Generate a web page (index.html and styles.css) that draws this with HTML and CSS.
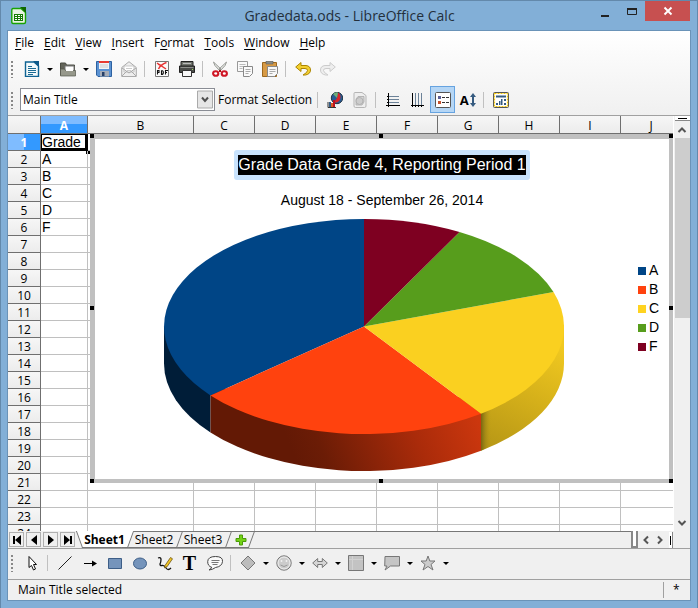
FILE: index.html
```html
<!DOCTYPE html>
<html lang="en">
<head>
<meta charset="utf-8">
<title>Gradedata.ods - LibreOffice Calc</title>
<link rel="stylesheet" href="styles.css">
</head>
<body>
<header class="titlebar">
  <svg class="app-icon" viewBox="0 0 16 18"><path d="M2 1.500h8l4.500 4v9.500q0 1.500-1.500 1.500H2Q.8 16.500.8 15V3Q.8 1.500 2 1.500z" fill="#e9f3e4" stroke="#18a303" stroke-width="1.400"/><path d="M9 0h6v6z" fill="#106802"/><path d="M3 7h9v7H3z" fill="#167a05"/><path d="M4 8h2v1H4zM7 8h2v1H7zM10 8h1v1h-1zM4 10h2v1H4zM7 10h2v1H7zM10 10h1v1h-1zM4 12h2v1H4zM7 12h2v1H7zM10 12h1v1h-1z" fill="#fff"/></svg>
  <h1>Gradedata.ods - LibreOffice Calc</h1>
  <div class="window-buttons">
    <button class="win" aria-label="Minimize"><svg viewBox="0 0 12 12"><path d="M2 9h8v2H2z" fill="#222"/></svg></button>
    <button class="win" aria-label="Maximize"><svg viewBox="0 0 12 12"><path d="M1.500 2.500h9v6h-9z" fill="none" stroke="#222"/><path d="M1 2h10v2H1z" fill="#222"/></svg></button>
    <button class="win close" aria-label="Close"><svg viewBox="0 0 12 12"><path d="M2.500 2.500l7 7M9.500 2.500l-7 7" stroke="#fff" stroke-width="1.900"/></svg></button>
  </div>
</header>
<main class="app">
  <div class="bars">
    <nav class="menubar">
      <button><u>F</u>ile</button><button><u>E</u>dit</button><button><u>V</u>iew</button><button><u>I</u>nsert</button><button>F<u>o</u>rmat</button><button><u>T</u>ools</button><button><u>W</u>indow</button><button><u>H</u>elp</button>
    </nav>
    <div class="toolbar">
      <span class="grip"></span>
      <button class="tool" aria-label="New"><svg viewBox="0 0 16 16"><path d="M1.500 1H10l4.500 4v10.500h-13z" fill="#f4fafc" stroke="#0f6393" stroke-width="1.400"/><path d="M9 0h6v6z" fill="#0f5a8a"/><path d="M4 5.500h4M4 7.500h8M4 9.500h8M4 11.500h8M4 13.500h5" stroke="#1b6b94"/></svg></button>
      <button class="drop" aria-label="New menu"></button>
      <button class="tool" aria-label="Open"><svg viewBox="0 0 16 16"><path d="M.5 14V2h5l1 2h8v10z" fill="#63655a" stroke="#4b4d43"/><path d="M5 5h9v6H5z" fill="#fff" stroke="#777"/><path d="M6.500 7.500h6M6.500 9.500h6" stroke="#aaa"/><path d="M.5 15h15V9.500h-10L4.500 8H.5z" fill="#96988b" stroke="#55574c" stroke-width=".7"/><path d="M6 7h7v3H6z" fill="#fff"/></svg></button>
      <button class="drop" aria-label="Open menu"></button>
      <button class="tool" aria-label="Save"><svg viewBox="0 0 16 16"><path d="M.5.5h15v15H2l-1.500-1.500z" fill="#5b92d2" stroke="#2d61a0"/><path d="M3 1h10v7H3z" fill="#f2f3f5"/><path d="M3 0h10v2H3z" fill="#e83a30"/><path d="M4 4h8M4 6h8" stroke="#ccc"/><path d="M4 10h9v5.500H4z" fill="#a5acb7"/><path d="M6 11h2.500v4H6z" fill="#253f67"/></svg></button>
      <button class="tool" aria-label="Mail"><svg viewBox="0 0 16 16"><path d="M.7 6.500L8 .7l7.300 5.800v9H.7z" fill="#eee" stroke="#aaa"/><path d="M3 5h10v6H3z" fill="#fff" stroke="#b5b5b5" stroke-width=".7"/><path d="M1 7l7 5 7-5M1 15l5-5M15 15l-5-5" fill="none" stroke="#aaa"/><path d="M5 7.500h6M6 9.500h4" stroke="#ccc"/></svg></button>
      <span class="sep"></span>
      <button class="tool" aria-label="Export as PDF"><svg viewBox="0 0 16 16"><path d="M1.500.5h13v15h-13z" fill="#fafafa" stroke="#777"/><path d="M3 2l9 6M12.500 1.500C8 3 6 5 4.500 8M4 3l4 2" stroke="#e73332" stroke-width="1.500" fill="none"/><path d="M3.500 13.500v-4h1.500v2H3.500M7.500 9.500v4c2.500 0 2.500-4 0-4M11.500 13.500v-4h2.500M11.500 11.500H13" fill="none" stroke="#111" stroke-width="1.100"/></svg></button>
      <button class="tool" aria-label="Print"><svg viewBox="0 0 16 16"><path d="M2 .5h12v5H2z" fill="#70746d" stroke="#222"/><path d="M4 2h8v1H4z" fill="#bbb"/><path d="M.5 5h15v6.500H.5z" fill="#4a4c49" stroke="#222"/><path d="M1.500 6h13v1h-13z" fill="#8c8e8a"/><path d="M3.500 9.500h9v6h-9z" fill="#f8f8f8" stroke="#333"/><path d="M13 8h1v1h-1z" fill="#9fdb62"/></svg></button>
      <span class="sep"></span>
      <button class="tool" aria-label="Cut"><svg viewBox="0 0 16 16"><path d="M1.500 1q0 3 5.500 8l2-1zM14.500 1q0 3-5.500 8L7 8z" fill="#e2e4e0" stroke="#888a85" stroke-width=".8"/><path d="M7 9l2 2M9 9l-2 2" stroke="#a11"/><ellipse cx="3.700" cy="12.500" rx="2.600" ry="2.300" fill="#fff" stroke="#cf1625" stroke-width="2.100"/><ellipse cx="12.300" cy="12.500" rx="2.600" ry="2.300" fill="#fff" stroke="#cf1625" stroke-width="2.100"/></svg></button>
      <button class="tool" aria-label="Copy"><svg viewBox="0 0 16 16"><path d="M.5.500h10v10H.5z" fill="#fafafa" stroke="#999"/><path d="M2.500 3.500h6M2.500 5.500h6M2.500 7.500h3" stroke="#bbb"/><path d="M6.500 5.500h9v7l-3 3h-6z" fill="#fafafa" stroke="#888"/><path d="M8.500 8.500h5M8.500 10.500h5M8.500 12.500h3" stroke="#aaa"/></svg></button>
      <button class="tool" aria-label="Paste"><svg viewBox="0 0 16 16"><path d="M.5 1.500h14v14H.5z" fill="#d79a45" stroke="#9b671e"/><path d="M4 0h7v3H4z" fill="#8a8c87" stroke="#555" stroke-width=".5"/><path d="M5.500 5.500h10v7l-3 3h-7z" fill="#f8f8f8" stroke="#888"/><path d="M7.500 8.500h6M7.500 10.500h6M7.500 12.500h3" stroke="#aaa"/></svg></button>
      <span class="sep"></span>
      <button class="tool" aria-label="Undo"><svg viewBox="0 0 16 16"><path d="M.7 6L6 1.500v3h5q4.500.5 4.500 4.500t-5 5H8q4.500-2.500 4.500-4.500T10 7.500H6v3z" fill="#f3cf2f" stroke="#ac8500"/></svg></button>
      <button class="tool" aria-label="Redo"><svg viewBox="0 0 16 16"><path d="M15.300 6L10 1.500v3H5Q.5 5 .5 9t5 5H8Q3.500 11.500 3.500 9.500T6 7.500h4v3z" fill="#eee" stroke="#ccc"/></svg></button>
    </div>
    <div class="toolbar formatting">
      <span class="grip"></span>
      <label class="combo"><select aria-label="Chart element"><option>Main Title</option></select><svg viewBox="0 0 16 18"><path d="M.5.5h15v17H.5z" fill="#e6e6e6" stroke="#aaa"/><path d="M5 7l3 3.500L11 7" fill="none" stroke="#505050" stroke-width="2"/></svg></label>
      <button class="text-tool">Format Selection</button>
      <span class="sep"></span>
      <button class="tool" aria-label="Chart type"><svg viewBox="0 0 16 16"><circle cx="10" cy="6" r="5.700" fill="#275c93" stroke="#234"/><path d="M10 6l1-5.500a5.500 5.500 0 0 1-4 10z" fill="#dc2328"/><path d="M10 6L6 2a5.500 5.500 0 0 1 5-1.500z" fill="#6fae78"/><path d="M1 10v5.500h8" fill="none" stroke="#333"/><path d="M2 10h2v5H2z" fill="#345d86"/><path d="M4 11h2v4H4z" fill="#d95a22"/><path d="M6 8h2v7H6z" fill="#b12"/></svg></button>
      <button class="tool" aria-label="Chart area"><svg viewBox="0 0 16 16"><path d="M2 1.500q0-1 1-1h7l4 3V14q0 1.500-1.500 1.500H3.500Q2 15.500 2 14z" fill="#eee" stroke="#b5b5b5"/><path d="M4 7l2-2.500h6V10l-2 3H4z" fill="#d5d5d5" stroke="#aaa" stroke-width=".8"/><circle cx="7.500" cy="9" r="3.500" fill="#ccc" stroke="#aaa" stroke-width=".8"/></svg></button>
      <span class="sep"></span>
      <button class="tool" aria-label="Horizontal grids"><svg viewBox="0 0 16 16"><path d="M3 4.500h11M3 7.500h11M3 10.500h11" stroke="#6c8298"/><path d="M3.500 1v14M1 13.500h14M2 4.500h2M2 7.500h2M2 10.500h2" stroke="#000"/></svg></button>
      <button class="tool" aria-label="Vertical grids"><svg viewBox="0 0 16 16"><path d="M5.500 1v12M8.500 1v12M11.500 1v12" stroke="#6c8298"/><path d="M2.500 1v14M1 13.500h13M5.500 13v2M8.500 13v2M11.500 13v2" stroke="#000"/></svg></button>
      <button class="tool active" aria-label="Legend"><svg viewBox="0 0 16 16"><rect x=".5" y=".5" width="15" height="15" rx="1" fill="#fff" stroke="#555"/><path d="M3 4h3v3H3z" fill="#5b5f97"/><path d="M3 9h3v3H3z" fill="#c6512d"/><path d="M7 5.500h3M11 5.500h3M7 10.500h3M11 10.500h3" stroke="#333"/></svg></button>
      <button class="tool scale" aria-label="Scale text"><b>A</b><svg viewBox="0 0 6 14"><path d="M3 0l3 4H4v6h2l-3 4-3-4h2V4H0z" fill="#365b80"/></svg></button>
      <span class="sep"></span>
      <button class="tool" aria-label="Automatic layout"><svg viewBox="0 0 16 16"><rect x=".5" y=".5" width="15" height="15" rx="1" fill="#fff" stroke="#555"/><rect x="1.500" y="1.500" width="13" height="13" fill="none" stroke="#f4c80a" stroke-width="1.200" stroke-dasharray="2 1"/><path d="M3 3.500h10v2H3zM3 11h2v2H3zM6 9h1.500v4H6zM8 7h1.500v6H8zM11 7h2v2h-2zM11 11h2v2h-2z" fill="#365b80"/></svg></button>
    </div>
  </div>
  <section class="workspace">
    <div class="sheet">
      <table><thead><tr><th></th></tr></thead><tbody></tbody></table>
      <figure class="chart">
        <i class="handle tl"></i><i class="handle tc"></i><i class="handle tr"></i><i class="handle ml"></i><i class="handle mr"></i><i class="handle bl"></i><i class="handle bc"></i><i class="handle br"></i>
        <h2><span>Grade Data Grade 4, Reporting Period 1</span></h2>
        <h3>August 18 - September 26, 2014</h3>
        <div class="plot">
          <svg class="pie" viewBox="0 0 402 254">
            <defs>
              <linearGradient id="orange-wall" gradientUnits="userSpaceOnUse" x1="130" y1="235" x2="300" y2="165"><stop offset="0" stop-color="#631905"/><stop offset=".15" stop-color="#6b1c06"/><stop offset=".65" stop-color="#aa2b0a"/><stop offset="1" stop-color="#cc370e"/></linearGradient>
              <linearGradient id="yellow-wall" gradientUnits="userSpaceOnUse" x1="330" y1="230" x2="385" y2="120"><stop offset="0" stop-color="#b89816"/><stop offset=".5" stop-color="#d5b01a"/><stop offset="1" stop-color="#f1c920"/></linearGradient>
              <linearGradient id="edge-shade"><stop offset="0" stop-color="#786611"/><stop offset="1" stop-color="#b99b19" stop-opacity="0"/></linearGradient>
            </defs>
            <path d="M1 108.500V145.500A200 107.500 0 0 0 47.500 214.400V150z" fill="#001d38"/>
            <path d="M47.500 170V214.400A200 107.500 0 0 0 318 232.700V180z" fill="url(#orange-wall)"/>
            <path d="M318 180V232.700A200 107.500 0 0 0 401 145.500V108.500z" fill="url(#yellow-wall)"/>
            <path d="M318 190V232.700l10-4.700V185z" fill="url(#edge-shade)"/>
            <path d="M201 108.500V1A200 107.500 0 0 0 47.500 177.400z" fill="#004586"/>
            <path d="M201 108.500L47.500 177.400A200 107.500 0 0 0 318 195.700z" fill="#ff420e"/>
            <path d="M201 108.500L318 195.700A200 107.500 0 0 0 390.500 74.100z" fill="#fad020"/>
            <path d="M201 108.500L390.500 74.100A200 107.500 0 0 0 296.500 14z" fill="#579d1c"/>
            <path d="M201 108.500L296.500 14A200 107.500 0 0 0 201 1z" fill="#7e0021"/>
          </svg>
          <ul class="legend"><li><i class="key-a"></i>A</li><li><i class="key-b"></i>B</li><li><i class="key-c"></i>C</li><li><i class="key-d"></i>D</li><li><i class="key-f"></i>F</li></ul>
        </div>
      </figure>
    </div>
    <div class="scrollbar">
      <span class="split"></span>
      <button aria-label="Scroll up"><svg viewBox="0 0 10 8"><path d="M1.500 6L5 2.500 8.500 6" fill="none" stroke="#555" stroke-width="2"/></svg></button>
      <div class="track"><span class="thumb"></span></div>
      <button aria-label="Scroll down"><svg viewBox="0 0 10 8"><path d="M1.500 2L5 5.500 8.500 2" fill="none" stroke="#555" stroke-width="2"/></svg></button>
    </div>
  </section>
  <div class="tabbar">
    <button class="nav" aria-label="First sheet"><svg viewBox="0 0 10 10"><path d="M1 1h2v8H1zM9 0v10L3 5z"/></svg></button>
    <button class="nav" aria-label="Previous sheet"><svg viewBox="0 0 10 10"><path d="M8 0v10L2 5z"/></svg></button>
    <button class="nav" aria-label="Next sheet"><svg viewBox="0 0 10 10"><path d="M2 0v10l6-5z"/></svg></button>
    <button class="nav" aria-label="Last sheet"><svg viewBox="0 0 10 10"><path d="M7 1h2v8H7zM1 0v10l6-5z"/></svg></button>
    <button class="tab current"><span>Sheet1</span></button>
    <button class="tab"><span>Sheet2</span></button>
    <button class="tab"><span>Sheet3</span></button>
    <button class="tab add" aria-label="Add sheet"><svg viewBox="0 0 12 12"><path d="M4.500 1h3v3.500H11v3H7.500V11h-3V7.500H1v-3h3.500z" fill="#73d216" stroke="#4a9a08"/></svg></button>
    <span class="filler"></span>
    <span class="hsplit"></span>
    <button class="hscroll" aria-label="Scroll left"><svg viewBox="0 0 8 10"><path d="M6 1.500L2.500 5 6 8.500" fill="none" stroke="#555" stroke-width="2"/></svg></button>
    <button class="hscroll" aria-label="Scroll right"><svg viewBox="0 0 8 10"><path d="M2 1.500L5.500 5 2 8.500" fill="none" stroke="#555" stroke-width="2"/></svg></button>
    <span class="endsplit"></span>
  </div>
  <div class="toolbar drawing">
    <span class="grip"></span>
    <button class="tool" aria-label="Select"><svg viewBox="0 0 16 16"><path d="M5 1.500v11l2.500-2 2 4.500 2-1-2-4.500h3z" fill="#fff" stroke="#111"/></svg></button>
    <span class="sep"></span>
    <button class="tool" aria-label="Line"><svg viewBox="0 0 16 16"><path d="M1.500 14.500l13-13" stroke="#222"/></svg></button>
    <button class="tool" aria-label="Arrow line"><svg viewBox="0 0 16 16"><path d="M2 8.500h9" stroke="#000"/><path d="M10 5.500l5 3-5 3z"/></svg></button>
    <button class="tool" aria-label="Rectangle"><svg viewBox="0 0 16 16"><path d="M1.500 3.500h13v10h-13z" fill="#7594bb" stroke="#3d5e87"/></svg></button>
    <button class="tool" aria-label="Ellipse"><svg viewBox="0 0 16 16"><ellipse cx="8" cy="8.500" rx="6.500" ry="5.500" fill="#7594bb" stroke="#3d5e87"/></svg></button>
    <button class="tool" aria-label="Freeform"><svg viewBox="0 0 16 16"><path d="M1 3q3-1 3 1.500T3 9q0 2 2 1.500T9 13t5 0" fill="none" stroke="#111" stroke-width="1.300"/><path d="M8 10.500l5.500-8 2 1.300-5.500 8-2.500 1z" fill="#f3c623" stroke="#6b5310" stroke-width=".8"/></svg></button>
    <button class="tool letter" aria-label="Text">T</button>
    <button class="tool" aria-label="Callout"><svg viewBox="0 0 16 16"><path d="M2 15l3-2.500Q.5 11 .7 6.500 1 1.500 8.500 1.500t7 5-7 6Q6 14.500 2 15z" fill="#fafafa" stroke="#444"/><path d="M4.500 5.500h8M4.500 7.500h7M5.500 9.500h5" stroke="#777"/></svg></button>
    <span class="sep"></span>
    <button class="tool" aria-label="Basic shapes"><svg viewBox="0 0 16 16"><path d="M8 1l7 7-7 7-7-7z" fill="#bcbcbc" stroke="#777"/></svg></button><button class="drop" aria-label="Basic shapes menu"></button>
    <button class="tool" aria-label="Symbol shapes"><svg viewBox="0 0 16 16"><circle cx="8" cy="8" r="7.200" fill="#ccc" stroke="#777"/><circle cx="8" cy="8" r="6" fill="none" stroke="#eee"/><path d="M5.500 5v2M10.500 5v2" stroke="#eee" stroke-width="1.500"/><path d="M4.500 10q3.500 3 7 0" fill="none" stroke="#999"/></svg></button><button class="drop" aria-label="Symbol shapes menu"></button>
    <button class="tool" aria-label="Block arrows"><svg viewBox="0 0 16 16"><path d="M.7 8l5-4.500v3h4.600v-3l5 4.500-5 4.500v-3H5.700v3z" fill="#d5d5d5" stroke="#777"/></svg></button><button class="drop" aria-label="Block arrows menu"></button>
    <button class="tool" aria-label="Flowcharts"><svg viewBox="0 0 16 16"><path d="M.5.500h15v15H.5z" fill="#c3c3c3" stroke="#777"/><path d="M4.500 1v14M1 4.500h14" stroke="#d2d2d2"/></svg></button><button class="drop" aria-label="Flowcharts menu"></button>
    <button class="tool" aria-label="Callouts"><svg viewBox="0 0 16 16"><path d="M1 1.500h14.500V11H6.500L1 15l2-4H.7z" fill="#c5c5c5" stroke="#777"/></svg></button><button class="drop" aria-label="Callouts menu"></button>
    <button class="tool" aria-label="Stars"><svg viewBox="0 0 16 16"><path d="M8 1l1.800 5H15l-4 3.500 2 5.500-5-3.500L3 15l2-5.500L1 6h5.200z" fill="#ccc" stroke="#777"/></svg></button><button class="drop" aria-label="Stars menu"></button>
  </div>
  <footer class="status"><span>Main Title selected</span><span class="modified">*</span></footer>
</main>
<script src="sheet.js"></script>
</body>
</html>
```
FILE: sheet.js
```js
const columns = "ABCDEFGHIJ".split("");
const values = ["Grade", "A", "B", "C", "D", "F"];
const head = document.querySelector("thead tr");
const body = document.querySelector("tbody");

for (const name of columns) {
  const th = document.createElement("th");
  th.scope = "col";
  th.className = "col-" + name.toLowerCase();
  th.textContent = name;
  head.append(th);
}

for (let row = 1; row <= 24; row++) {
  const tr = document.createElement("tr");
  const th = document.createElement("th");
  th.scope = "row";
  th.textContent = row;
  tr.append(th);
  for (const name of columns) {
    const td = document.createElement("td");
    if (name === "A") td.textContent = values[row - 1] || "";
    tr.append(td);
  }
  body.append(tr);
}
```
FILE: styles.css
```css
* { box-sizing: border-box; }
html, body { height: 100%; }
body {
  margin: 0;
  padding: 0 7px 8px;
  display: flex;
  flex-direction: column;
  background: #82afd7;
  border: 1px solid #6389ab;
  border-bottom-width: 0;
  font: 12px/16px "Open Sans", "Noto Sans", sans-serif;
  color: #000;
  overflow: hidden;
}
button { border: 0; padding: 0; background: none; font: inherit; color: inherit; }
svg { display: block; }

.titlebar { display: flex; align-items: center; height: 29px; flex: none; }
.app-icon { width: 16px; height: 18px; margin-left: 3px; }
.titlebar h1 { flex: 1; margin: 0; font-size: 14px; line-height: 20px; font-weight: 400; color: #24303c; text-align: center; padding-left: 81px; }
.window-buttons { display: flex; align-self: flex-start; }
.win { width: 27px; height: 21px; display: grid; place-items: center; }
.win svg { width: 12px; height: 12px; }
.win.close { width: 45px; height: 20px; background: #c75050; }

.app { flex: 1; min-height: 0; display: flex; flex-direction: column; background: #f0f0f0; outline: 1px solid #6a93b8; margin-top: 1px; }
.bars { background: linear-gradient(#fff, #f0f0f0); border-bottom: 1px solid #a0a0a0; }
.menubar { display: flex; gap: 10px; height: 23px; padding-left: 7px; align-items: center; }
.menubar u { text-underline-offset: 2px; }

.toolbar { display: flex; align-items: center; height: 30px; }
.toolbar.formatting { height: 31px; }
.grip { width: 11px; height: 18px; background: radial-gradient(circle, #888 1px, transparent 1px) 2px 0 / 4px 4px repeat-y; }
.tool { width: 25px; height: 27px; display: grid; place-items: center; }
.tool svg { width: 16px; height: 16px; }
.tool.active { background: #b5d6f5; border: 1px solid #66a3e0; }
.tool.scale { display: flex; align-items: center; justify-content: center; gap: 1px; font-size: 13px; }
.tool.scale svg { width: 6px; height: 14px; }
.tool.letter { font: bold 20px/20px "Liberation Serif", serif; }
.drop { width: 11px; height: 20px; display: grid; place-items: center; }
.drop::before { content: ""; border: 3px solid transparent; border-top-color: #000; border-bottom: 0; }
.sep { width: 8px; height: 16px; border-left: 1px solid #c0c0c0; margin-left: 3px; margin-right: -3px; }

.combo { position: relative; width: 195px; margin-left: 1px; }
.combo select { display: block; appearance: none; width: 100%; height: 23px; border: 1px solid #8a8d95; background: #fff; padding: 0 2px; border-radius: 0; font: inherit; color: #000; }
.combo svg { position: absolute; right: 2px; top: 2px; width: 16px; height: 19px; pointer-events: none; }
.text-tool { margin: 0 2px 0 3px; }

.workspace { flex: 1; min-height: 0; display: flex; background: #f0f0f0; }
.sheet { flex: 1; min-width: 0; position: relative; overflow: hidden; background: #fff; }
table { width: 100%; min-width: 674px; table-layout: fixed; border-collapse: separate; border-spacing: 0; }
th, td { height: 17px; padding: 0 1px; border-right: 1px solid #c0c0c0; border-bottom: 1px solid #c0c0c0; line-height: 16px; }
th { width: 33px; padding-top: 2px; line-height: 14px; font-weight: 400; background: linear-gradient(#f6f6f6, #ececec); border-color: #6f6f6f; }
td { font-family: "Liberation Sans", sans-serif; font-size: 14px; position: relative; }
thead th { height: 18px; width: 61px; }
thead th:first-child { width: 33px; }
thead .col-a { width: 47px; }
thead .col-b { width: 106px; }
thead .col-j { width: auto; }
thead .col-a, tbody tr:first-child th { color: #fff; font-weight: 700; }
thead .col-a { background: linear-gradient(#7fbcff 50%, #3399ff 50%); }
tbody tr:first-child th { background: linear-gradient(90deg, #7fbcff 50%, #3399ff 50%); }
tbody tr:first-child td:nth-child(2)::before { content: ""; position: absolute; inset: 0 -1px -1px 0; border: solid #000; border-width: 1px 3px 3px 1px; }
tbody tr:first-child td:nth-child(2)::after { content: ""; position: absolute; right: -3px; bottom: -4px; width: 4px; height: 4px; background: #000; }

.chart { position: absolute; left: 82px; top: 18px; right: 0; height: 349px; margin: 0; padding-top: 11px; border: 5px solid #c0c0c0; border-width: 5px 4px 4px 5px; background: #fff; text-align: center; font-family: "Liberation Sans", sans-serif; }
.chart h2 { display: table; margin: 0 auto; padding: 5px 4px; border-radius: 3px; background: #c9e3fd; font-size: 16px; line-height: 20px; font-weight: 400; }
.chart h2 span { display: block; background: #000; color: #fff; }
.chart h3 { margin: 10px 0 8px; font-size: 14px; line-height: 20px; font-weight: 400; }
.handle { position: absolute; width: 4px; height: 4px; background: #000; }
.tl, .tc, .tr { top: -5px; }
.bl, .bc, .br { bottom: -4px; }
.tl, .ml, .bl { left: -5px; }
.tr, .mr, .br { right: -4px; }
.tc, .bc { left: calc(50% - 3px); }
.ml, .mr { top: calc(50% - 3px); }
.plot { display: flex; justify-content: flex-end; align-items: flex-start; }
.pie { width: 402px; height: 254px; }
.legend { list-style: none; margin: 43px 10px 0 73px; padding: 0; text-align: left; font-size: 14px; line-height: 19px; }
.legend li { display: flex; align-items: center; gap: 3px; }
.legend i { width: 8px; height: 8px; }
.key-a { background: #004586; }
.key-b { background: #ff420e; }
.key-c { background: #ffd320; }
.key-d { background: #579d1c; }
.key-f { background: #7e0021; }

.scrollbar { width: 17px; display: flex; flex-direction: column; align-items: center; border-left: 1px solid #fff; }
.split { width: 15px; height: 5px; border-bottom: 1px solid #888; background: linear-gradient(#000, #000) center 2px / 9px 1px no-repeat #fff; }
.scrollbar button { height: 17px; width: 16px; display: grid; place-items: center; }
.scrollbar button svg { width: 10px; height: 8px; }
.track { flex: 1; width: 15px; }
.thumb { display: block; height: 48%; background: #cdcdcd; }

.tabbar { display: flex; align-items: center; height: 18px; flex: none; border-bottom: 1px solid #a0a0a0; padding-left: 1px; }
.nav { width: 15px; height: 15px; margin-right: 2px; border: 1px solid #b0b0b0; display: grid; place-items: center; }
.nav svg { width: 10px; height: 10px; }
.tab { position: relative; z-index: 0; width: 49px; height: 17px; line-height: 16px; padding-right: 3px; }
.tab::before { content: ""; position: absolute; z-index: -1; inset: 0; border: 1px solid #777; border-left: 0; transform: skewX(-20deg); }
.tab.current { width: 54px; padding: 0 0 0 1px; font-weight: 700; }
.tab.current::before { border-top: 0; background: #fff; left: 10px; }
.tab.current::after { content: ""; position: absolute; z-index: -1; inset: 0 12px 0 2px; border-left: 1px solid #777; border-bottom: 1px solid #777; background: #fff; transform: skewX(20deg); }
.tab.add { width: 23px; padding: 0; display: grid; place-items: center; }
.tab.add svg { width: 12px; height: 12px; }
.filler { flex: 1; align-self: stretch; border-top: 1px solid #777; margin-left: 2px; }
.hsplit { width: 7px; height: 17px; border: 2px solid #888; border-top: 0; background: #fff; margin-right: 1px; }
.hscroll { width: 14px; height: 16px; display: grid; place-items: center; }
.hscroll svg { width: 8px; height: 10px; }
.endsplit { width: 4px; height: 16px; margin: 0 17px 0 2px; background: linear-gradient(#000, #000) 1px 4px / 1px 9px no-repeat #fff; border-right: 1px solid #888; }

.drawing { height: 31px; flex: none; padding-bottom: 2px; border-bottom: 1px solid #a0a0a0; }
.status { height: 20px; flex: none; display: flex; justify-content: space-between; align-items: center; padding-left: 10px; }
.modified { border-left: 1px solid #a0a0a0; width: 27px; padding-left: 9px; }
```
